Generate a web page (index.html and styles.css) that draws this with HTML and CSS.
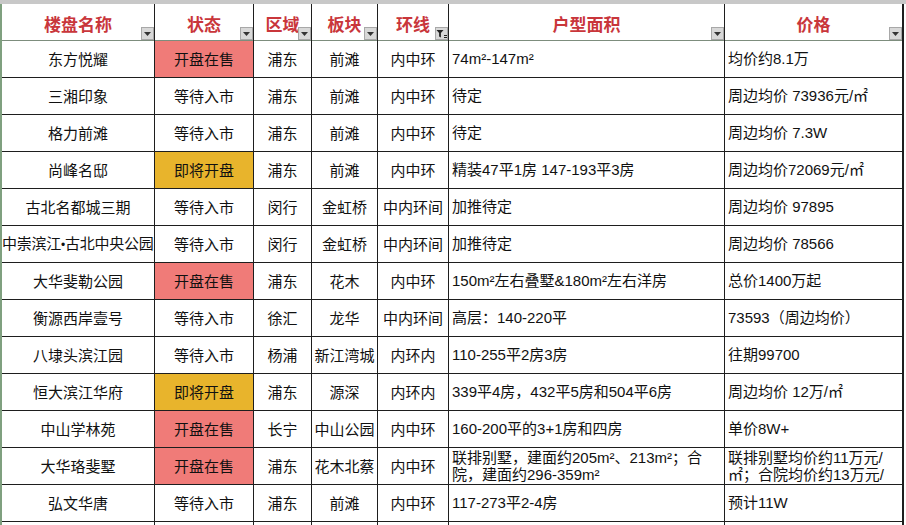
FILE: index.html
```html
<!DOCTYPE html>
<html lang="zh-CN">
<head>
<meta charset="utf-8">
<title>楼盘列表</title>
<link rel="stylesheet" href="styles.css">
</head>
<body>
<div class="sheet">
  <div class="colbar"></div>
  <div class="grid">
    <div class="hd">楼盘名称<span class="dd"><svg viewBox="0 0 13 13" width="13" height="13"><path d="M3 5h7l-3.5 4z" fill="#333"/></svg></span></div>
    <div class="hd">状态<span class="dd"><svg viewBox="0 0 13 13" width="13" height="13"><path d="M3 5h7l-3.5 4z" fill="#333"/></svg></span></div>
    <div class="hd">区域<span class="dd"><svg viewBox="0 0 13 13" width="13" height="13"><path d="M3 5h7l-3.5 4z" fill="#333"/></svg></span></div>
    <div class="hd">板块<span class="dd"><svg viewBox="0 0 13 13" width="13" height="13"><path d="M3 5h7l-3.5 4z" fill="#333"/></svg></span></div>
    <div class="hd">环线<span class="dd"><svg viewBox="0 0 13 13" width="13" height="13"><path d="M1.5 3h7l-2.6 3v4.5l-1.8-1v-3.5z" fill="#222"/><path d="M9 8.5h3M9 10.5h3" stroke="#222" stroke-width="1"/></svg></span></div>
    <div class="hd">户型面积<span class="dd"><svg viewBox="0 0 13 13" width="13" height="13"><path d="M3 5h7l-3.5 4z" fill="#333"/></svg></span></div>
    <div class="hd">价格<span class="dd"><svg viewBox="0 0 13 13" width="13" height="13"><path d="M3 5h7l-3.5 4z" fill="#333"/></svg></span></div>

    <div class="c">东方悦耀</div><div class="c red">开盘在售</div><div class="c">浦东</div><div class="c">前滩</div><div class="c">内中环</div><div class="l">74m²-147m²</div><div class="l">均价约8.1万</div>
    <div class="c">三湘印象</div><div class="c">等待入市</div><div class="c">浦东</div><div class="c">前滩</div><div class="c">内中环</div><div class="l">待定</div><div class="l">周边均价 73936元/㎡</div>
    <div class="c">格力前滩</div><div class="c">等待入市</div><div class="c">浦东</div><div class="c">前滩</div><div class="c">内中环</div><div class="l">待定</div><div class="l">周边均价 7.3W</div>
    <div class="c">尚峰名邸</div><div class="c amber">即将开盘</div><div class="c">浦东</div><div class="c">前滩</div><div class="c">内中环</div><div class="l">精装47平1房 147-193平3房</div><div class="l">周边均价72069元/㎡</div>
    <div class="c">古北名都城三期</div><div class="c">等待入市</div><div class="c">闵行</div><div class="c">金虹桥</div><div class="c">中内环间</div><div class="l">加推待定</div><div class="l">周边均价 97895</div>
    <div class="c clip"><span>中崇滨江<span class="dot">•</span>古北中央公园</span></div><div class="c">等待入市</div><div class="c">闵行</div><div class="c">金虹桥</div><div class="c">中内环间</div><div class="l">加推待定</div><div class="l">周边均价 78566</div>
    <div class="c">大华斐勒公园</div><div class="c red">开盘在售</div><div class="c">浦东</div><div class="c">花木</div><div class="c">内中环</div><div class="l">150m²左右叠墅&amp;180m²左右洋房</div><div class="l">总价1400万起</div>
    <div class="c">衡源西岸壹号</div><div class="c">等待入市</div><div class="c">徐汇</div><div class="c">龙华</div><div class="c">中内环间</div><div class="l">高层：140-220平</div><div class="l">73593（周边均价）</div>
    <div class="c">八埭头滨江园</div><div class="c">等待入市</div><div class="c">杨浦</div><div class="c">新江湾城</div><div class="c">内环内</div><div class="l">110-255平2房3房</div><div class="l">往期99700</div>
    <div class="c">恒大滨江华府</div><div class="c amber">即将开盘</div><div class="c">浦东</div><div class="c">源深</div><div class="c">内环内</div><div class="l">339平4房，432平5房和504平6房</div><div class="l">周边均价 12万/㎡</div>
    <div class="c">中山学林苑</div><div class="c red">开盘在售</div><div class="c">长宁</div><div class="c">中山公园</div><div class="c">内中环</div><div class="l">160-200平的3+1房和四房</div><div class="l">单价8W+</div>
    <div class="c">大华珞斐墅</div><div class="c red">开盘在售</div><div class="c">浦东</div><div class="c">花木北蔡</div><div class="c">内中环</div><div class="l two">联排别墅，建面约205m²、213m²；合<br>院，建面约296-359m²</div><div class="l two">联排别墅均价约11万元/<br>㎡；合院均价约13万元/</div>
    <div class="c">弘文华唐</div><div class="c">等待入市</div><div class="c">浦东</div><div class="c">前滩</div><div class="c">内中环</div><div class="l">117-273平2-4房</div><div class="l">预计11W</div>
    <div class="c"></div><div class="c"></div><div class="c"></div><div class="c"></div><div class="c"></div><div class="l"></div><div class="l"></div>
  </div>
</div>
</body>
</html>
```

FILE: styles.css
```css
html, body {
  margin: 0;
  padding: 0;
  background: #ffffff;
}
body {
  width: 906px;
  height: 525px;
  overflow: hidden;
  font-family: "Noto Sans CJK SC", "Noto Sans", sans-serif;
  color: #111;
}
.sheet {
  width: 906px;
  height: 525px;
  overflow: hidden;
}
.colbar {
  height: 4px;
  background: #c8c8c8;
}
.grid {
  display: grid;
  grid-template-columns: 152px 98px 57px 65px 70px 275px 177px;
  grid-auto-rows: 36px;
  gap: 1px;
  width: 901px;
  background: #1e1e1e;
  border-left: 2px solid #7fa07f;
  padding-right: 1px;
}
.hd {
  position: relative;
  background: #fff;
  display: flex;
  align-items: center;
  justify-content: center;
  font-size: 17px;
  font-weight: 700;
  color: #c9363b;
  padding-top: 2px;
  box-sizing: border-box;
  box-shadow: 0 1px 0 #7d8d7d;
}
.dd {
  position: absolute;
  right: 0;
  bottom: 0;
  width: 13px;
  height: 13px;
  box-sizing: border-box;
  background: #d8d8d8;
  border: 1px solid #a8a8a8;
  display: flex;
  align-items: center;
  justify-content: center;
}
.dd svg {
  display: block;
  flex: none;
}
.c, .l {
  background: #fff;
  display: flex;
  align-items: center;
  font-size: 15px;
  line-height: 18px;
  white-space: nowrap;
  overflow: hidden;
}
.c {
  justify-content: center;
}
.l {
  justify-content: flex-start;
  padding-left: 3px;
  font-family: "Liberation Sans", "Noto Sans CJK SC", sans-serif;
}
.two {
  line-height: 17px;
  align-items: flex-start;
  padding-top: 1px;
}
.clip {
  justify-content: flex-start;
  letter-spacing: -0.25px;
}
.dot {
  font-family: "Liberation Sans", sans-serif;
  font-size: 12px;
}
.red {
  background: #f07b78;
}
.amber {
  background: #e8b42c;
}
```
